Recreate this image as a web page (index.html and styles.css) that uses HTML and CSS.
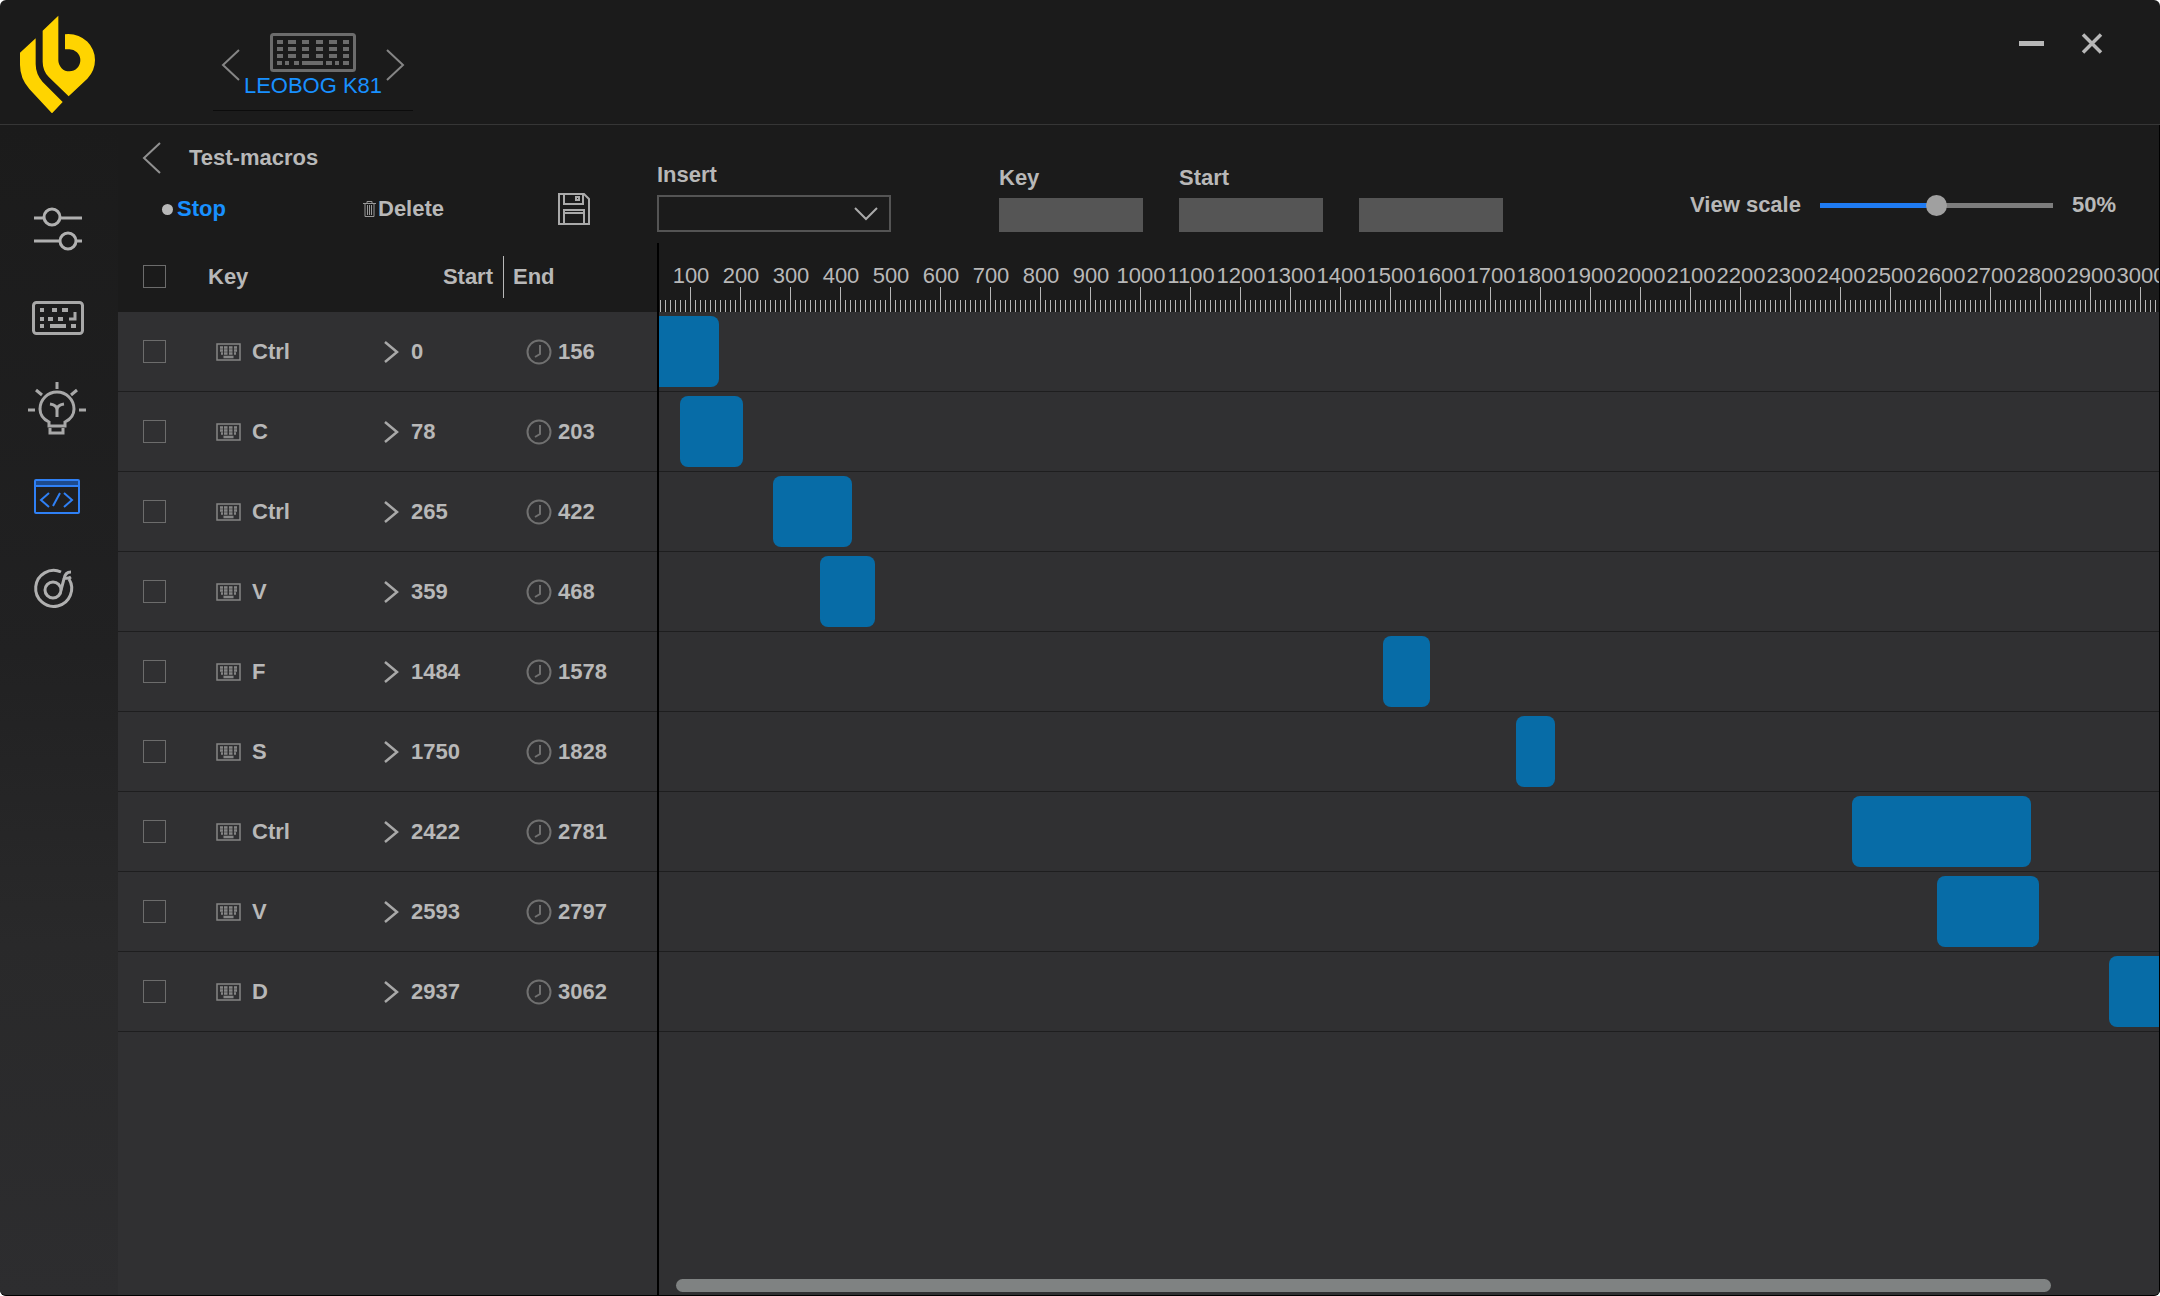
FILE: index.html
```html
<!DOCTYPE html>
<html lang="en">
<head>
  <meta charset="UTF-8">
  <meta name="viewport" content="width=device-width, initial-scale=1.0">
  <title>LEOBOG K81</title>
  <link rel="stylesheet" href="styles.css">
</head>
<body>
  <!-- shared icons -->
  <svg class="sprite" aria-hidden="true">
    <symbol id="icon-key" viewBox="0 0 25 18">
      <rect x="1" y="1" width="23" height="16" fill="none" stroke="#858585" stroke-width="1.5"/>
      <path d="M4 4.500h3M8 4.500h3.500M13 4.500h3.500M18 4.500h3M4 7.500h3M8 7.500h3.500M13 7.500h3.500M18 7.500h3M5 10.500h2M8 10.500h3.500M13 10.500h3.500M18 10.500h2M7.500 14h10" fill="none" stroke="#858585" stroke-width="2.400"/>
    </symbol>
    <symbol id="icon-from" viewBox="0 0 15 22">
      <path d="M1 1l12 10-12 10" fill="none" stroke="#a8a8a8" stroke-width="2.500"/>
    </symbol>
    <symbol id="icon-clock" viewBox="0 0 26 26">
      <circle cx="13" cy="13" r="11.500" fill="none" stroke="#707070" stroke-width="2"/>
      <path d="M14 6v9l-5 3" fill="none" stroke="#707070" stroke-width="2"/>
    </symbol>
  </svg>

  <div class="app">
    <header class="titlebar">
      <div class="logo">
        <svg width="76" height="98" viewBox="57 45 228 294" aria-label="LEOBOG">
          <path fill="#ffd400" d="M107 115L60 158V195Q60 235 88 267L156 340 188 306 128 246Q107 222 107 192Z"/>
          <path fill="#ffd400" d="M175 47L128 92V185Q128 213 147 232L206 289 262 236Q285 212 285 180A80 78 0 0 0 205 102L195 103V148H207A33 33 0 1 1 175 181Z"/>
        </svg>
      </div>
      <div class="device">
        <button class="icon-btn" aria-label="Previous device">
          <svg width="20" height="32" viewBox="0 0 20 32"><path d="M18 1L2 16l16 15" fill="none" stroke="#858585" stroke-width="2"/></svg>
        </button>
        <div class="device-info">
          <svg width="86" height="40" viewBox="0 0 86 40">
            <rect x="1.500" y="1.500" width="83" height="36" rx="2" fill="none" stroke="#6c6c6c" stroke-width="3"/>
            <path d="M7 9h6M18 9h8M32 9h7M46 9h7M59 9h8M73 9h6M7 16h6M18 16h8M32 16h7M46 16h7M59 16h8M73 16h6M7 23h6M18 23h8M32 23h7M46 23h7M59 23h8M73 23h6M7 30h5M15 30h4M24 30h5M32 30h21M56 30h6M65 30h4M73 30h6" fill="none" stroke="#6c6c6c" stroke-width="4"/>
          </svg>
          <span class="device-name">LEOBOG K81</span>
        </div>
        <button class="icon-btn" aria-label="Next device">
          <svg width="20" height="32" viewBox="0 0 20 32"><path d="M2 1l16 15L2 31" fill="none" stroke="#858585" stroke-width="2"/></svg>
        </button>
      </div>
      <div class="window-buttons">
        <button class="icon-btn" aria-label="Minimize">
          <svg width="26" height="22" viewBox="0 0 26 22"><path d="M0 11.500h25" stroke="#b8b8b8" stroke-width="5"/></svg>
        </button>
        <button class="icon-btn" aria-label="Close">
          <svg width="22" height="22" viewBox="0 0 22 22"><path d="M2 2.500l18 18M20 2.500L2 20.500" stroke="#b8b8b8" stroke-width="3.500"/></svg>
        </button>
      </div>
    </header>

    <div class="workspace">
      <nav class="sidebar">
        <button class="nav-btn" aria-label="Settings">
          <svg viewBox="0 184 118 90" fill="none" stroke="#b0b0b0" stroke-width="3">
            <path d="M34 218h10M60 218h22M34 241h26M77 241h5"/>
            <circle cx="52" cy="217" r="8"/><circle cx="68" cy="241" r="8"/>
          </svg>
        </button>
        <button class="nav-btn" aria-label="Keys">
          <svg viewBox="0 274 118 90" fill="none" stroke="#a8a8a8" stroke-width="3">
            <rect x="33.500" y="302.500" width="49" height="31" rx="3"/>
            <path d="M40 310h4M52 310h5M62 310h6M40 319h4M48 319h5M58 319h5M40 326h4M50 326h16M71 326h5" stroke-width="4"/>
            <path d="M75 312v7h-6"/>
          </svg>
        </button>
        <button class="nav-btn" aria-label="Lighting">
          <svg viewBox="0 364 118 90" fill="none" stroke="#a8a8a8" stroke-width="3">
            <path d="M57 382v7M36 390l6 5M77 390l-6 5M28 410h7M79 410h7"/>
            <path d="M49 426v-4c-6-3-9-8-9-13a17 17 0 0 1 34 0c0 5-3 10-9 13v4zM50 428v5h13v-5"/>
            <path d="M50 404q7 1 7 6v7M64 404q-7 1-7 6"/>
          </svg>
        </button>
        <button class="nav-btn" aria-label="Macros">
          <svg viewBox="0 454 118 90" fill="none" stroke="#2f80f5" stroke-width="2">
            <path d="M36 481h42v4H36z" fill="#1d4a8c" stroke="none"/>
            <rect x="35" y="480" width="44" height="33" rx="1"/>
            <path d="M35 486h44"/>
            <path d="M49 493l-8 7 8 7M64 493l8 7-8 7M60 493l-7 13"/>
          </svg>
        </button>
        <button class="nav-btn" aria-label="Music">
          <svg viewBox="0 543 118 90" fill="none" stroke="#b0b0b0" stroke-width="3">
            <path d="M61 571a18 18 0 1 0 8 7"/>
            <circle cx="53" cy="589" r="8"/>
            <path d="M61 589l3-11q1-7 7-7"/><path d="M64 577q4 1 7-1"/>
          </svg>
        </button>
      </nav>

      <main class="editor">
        <section class="macro-tools">
          <div class="macro-title">
            <button class="icon-btn" aria-label="Back">
              <svg width="20" height="32" viewBox="0 0 20 32"><path d="M18 1L2 16l16 15" fill="none" stroke="#909090" stroke-width="2"/></svg>
            </button>
            <span>Test-macros</span>
          </div>
          <div class="macro-actions">
            <button class="text-btn stop"><span class="dot"></span>Stop</button>
            <button class="text-btn delete">
              <svg width="13" height="16" viewBox="0 0 13 16" fill="none" stroke="#999" stroke-width="1"><path d="M0 2.500h13M4 2V.5h5V2M2 3v12.500h9V3M4.500 4v10M6.500 4v10M8.500 4v10"/></svg>
              Delete
            </button>
            <button class="icon-btn" aria-label="Save">
              <svg width="32" height="32" viewBox="0 0 32 32" fill="none" stroke="#aaa" stroke-width="2">
                <path d="M1 1h25l5 5v25H1zM6 1v10h19V1M6 31V17h20v14M6 20h20"/><path d="M18 4h3v3h-3z"/>
              </svg>
            </button>
          </div>
        </section>

        <section class="event-tools">
          <div class="field">
            <label for="insert">Insert</label>
            <div class="select-wrap">
              <select id="insert"><option></option></select>
              <svg width="24" height="14" viewBox="0 0 24 14"><path d="M1 1l11 11L23 1" fill="none" stroke="#aaa" stroke-width="2"/></svg>
            </div>
          </div>
          <div class="values">
            <div class="field">
              <label for="key">Key</label>
              <input class="value-box" id="key" type="text">
            </div>
            <div class="field">
              <label for="start">Start</label>
              <input class="value-box" id="start" type="text">
            </div>
            <div class="field">
              <input class="value-box" type="text" aria-label="End">
            </div>
          </div>
          <div class="scale">
            <label for="scale">View scale</label>
            <input id="scale" type="range" min="0" max="100" value="50">
            <output for="scale">50%</output>
          </div>
        </section>

        <section class="events">
          <table>
            <thead>
              <tr>
                <th class="col-check"><input type="checkbox" aria-label="Select all"></th>
                <th class="col-key">Key</th>
                <th class="col-start">Start</th>
                <th class="col-end"><span>End</span></th>
              </tr>
            </thead>
            <tbody>
              <tr>
                <td><input type="checkbox" aria-label="Ctrl 0"></td>
                <td><div class="cell key"><svg><use href="#icon-key"/></svg>Ctrl</div></td>
                <td><div class="cell from"><svg><use href="#icon-from"/></svg>0</div></td>
                <td><div class="cell to"><svg><use href="#icon-clock"/></svg>156</div></td>
              </tr>
              <tr>
                <td><input type="checkbox" aria-label="C 78"></td>
                <td><div class="cell key"><svg><use href="#icon-key"/></svg>C</div></td>
                <td><div class="cell from"><svg><use href="#icon-from"/></svg>78</div></td>
                <td><div class="cell to"><svg><use href="#icon-clock"/></svg>203</div></td>
              </tr>
              <tr>
                <td><input type="checkbox" aria-label="Ctrl 265"></td>
                <td><div class="cell key"><svg><use href="#icon-key"/></svg>Ctrl</div></td>
                <td><div class="cell from"><svg><use href="#icon-from"/></svg>265</div></td>
                <td><div class="cell to"><svg><use href="#icon-clock"/></svg>422</div></td>
              </tr>
              <tr>
                <td><input type="checkbox" aria-label="V 359"></td>
                <td><div class="cell key"><svg><use href="#icon-key"/></svg>V</div></td>
                <td><div class="cell from"><svg><use href="#icon-from"/></svg>359</div></td>
                <td><div class="cell to"><svg><use href="#icon-clock"/></svg>468</div></td>
              </tr>
              <tr>
                <td><input type="checkbox" aria-label="F 1484"></td>
                <td><div class="cell key"><svg><use href="#icon-key"/></svg>F</div></td>
                <td><div class="cell from"><svg><use href="#icon-from"/></svg>1484</div></td>
                <td><div class="cell to"><svg><use href="#icon-clock"/></svg>1578</div></td>
              </tr>
              <tr>
                <td><input type="checkbox" aria-label="S 1750"></td>
                <td><div class="cell key"><svg><use href="#icon-key"/></svg>S</div></td>
                <td><div class="cell from"><svg><use href="#icon-from"/></svg>1750</div></td>
                <td><div class="cell to"><svg><use href="#icon-clock"/></svg>1828</div></td>
              </tr>
              <tr>
                <td><input type="checkbox" aria-label="Ctrl 2422"></td>
                <td><div class="cell key"><svg><use href="#icon-key"/></svg>Ctrl</div></td>
                <td><div class="cell from"><svg><use href="#icon-from"/></svg>2422</div></td>
                <td><div class="cell to"><svg><use href="#icon-clock"/></svg>2781</div></td>
              </tr>
              <tr>
                <td><input type="checkbox" aria-label="V 2593"></td>
                <td><div class="cell key"><svg><use href="#icon-key"/></svg>V</div></td>
                <td><div class="cell from"><svg><use href="#icon-from"/></svg>2593</div></td>
                <td><div class="cell to"><svg><use href="#icon-clock"/></svg>2797</div></td>
              </tr>
              <tr>
                <td><input type="checkbox" aria-label="D 2937"></td>
                <td><div class="cell key"><svg><use href="#icon-key"/></svg>D</div></td>
                <td><div class="cell from"><svg><use href="#icon-from"/></svg>2937</div></td>
                <td><div class="cell to"><svg><use href="#icon-clock"/></svg>3062</div></td>
              </tr>
            </tbody>
          </table>
        </section>

        <section class="timeline">
          <div class="ruler">
            <span>100</span><span>200</span><span>300</span><span>400</span><span>500</span>
            <span>600</span><span>700</span><span>800</span><span>900</span><span>1000</span>
            <span>1100</span><span>1200</span><span>1300</span><span>1400</span><span>1500</span>
            <span>1600</span><span>1700</span><span>1800</span><span>1900</span><span>2000</span>
            <span>2100</span><span>2200</span><span>2300</span><span>2400</span><span>2500</span>
            <span>2600</span><span>2700</span><span>2800</span><span>2900</span><span>3000</span>
          </div>
          <!-- 1px = 2ms -->
          <div class="lane"><div class="block" style="margin-left: 0px; width: 78px"></div></div>
          <div class="lane"><div class="block" style="margin-left: 39px; width: 63px"></div></div>
          <div class="lane"><div class="block" style="margin-left: 132px; width: 79px"></div></div>
          <div class="lane"><div class="block" style="margin-left: 179px; width: 55px"></div></div>
          <div class="lane"><div class="block" style="margin-left: 742px; width: 47px"></div></div>
          <div class="lane"><div class="block" style="margin-left: 875px; width: 39px"></div></div>
          <div class="lane"><div class="block" style="margin-left: 1211px; width: 179px"></div></div>
          <div class="lane"><div class="block" style="margin-left: 1296px; width: 102px"></div></div>
          <div class="lane"><div class="block" style="margin-left: 1468px; width: 63px"></div></div>
          <div class="scrollbar"></div>
        </section>
      </main>
    </div>
  </div>
</body>
</html>
```
FILE: styles.css
```css
* {
  box-sizing: border-box;
}
body {
  margin: 0;
  background: #fff;
  color: #b8b8b8;
  font-family: "Liberation Sans", Arial, sans-serif;
  font-size: 22px;
  font-weight: bold;
  line-height: 26px;
}
button, input, select {
  font: inherit;
  color: inherit;
}
button {
  padding: 0;
  border: none;
  background: none;
  cursor: pointer;
}
svg {
  display: block;
  flex: none;
}
.sprite {
  position: absolute;
  width: 0;
  height: 0;
}
.app {
  display: flex;
  flex-direction: column;
  min-height: 100vh;
  overflow: hidden;
  border-bottom: 1px solid #000;
  border-radius: 6px;
  background: #1b1b1b;
}

/* title bar */
.titlebar {
  display: flex;
  height: 125px;
  border-bottom: 1px solid #363636;
}
.logo {
  width: 118px;
  padding: 15px 0 0 19px;
}
.device {
  display: flex;
  align-items: center;
  justify-content: space-between;
  width: 200px;
  height: 111px;
  margin-left: 95px;
  padding: 20px 8px 0;
  border-bottom: 1px solid #0c0c0c;
}
.device-info {
  display: flex;
  flex-direction: column;
  align-items: center;
  width: 144px;
  margin: 0 -10px;
  padding-top: 2px;
}
.device-name {
  color: #1890ff;
  font-weight: normal;
  white-space: nowrap;
}
.window-buttons {
  display: flex;
  align-items: flex-start;
  gap: 36px;
  margin-left: auto;
  padding: 32px 57px 0 0;
}

/* left navigation */
.workspace {
  display: flex;
  flex: 1;
}
.sidebar {
  flex: none;
  width: 118px;
  padding-top: 59px;
  background: linear-gradient(#1b1b1b, #212122 45%, #29292a 70%, #2d2d2f);
}
.nav-btn {
  display: block;
  width: 100%;
  height: 90px;
}
.nav-btn svg {
  width: 100%;
  height: 100%;
}

/* macro editor */
.editor {
  display: grid;
  flex: 1;
  grid-template-columns: 539px minmax(0, 1fr);
  grid-template-rows: 118px 1fr;
  min-width: 0;
  border-right: 1px solid #000;
}
.macro-tools {
  padding: 17px 0 0 24px;
}
.macro-title {
  display: flex;
  align-items: center;
  gap: 27px;
}
.macro-actions {
  display: grid;
  grid-template-columns: 201px 195px auto;
  align-items: center;
  justify-content: start;
  margin-top: 19px;
  padding-left: 20px;
}
.text-btn {
  display: flex;
  align-items: center;
}
.stop {
  gap: 4px;
  color: #1890ff;
}
.delete {
  gap: 2px;
}
.dot {
  width: 11px;
  height: 11px;
  border-radius: 50%;
  background: #b8b8b8;
}
.event-tools {
  display: flex;
  align-items: flex-end;
  padding: 0 43px 11px 0;
}
.field {
  display: flex;
  flex-direction: column;
  justify-content: flex-end;
  gap: 7px;
}
.select-wrap {
  position: relative;
}
.select-wrap select {
  display: block;
  width: 234px;
  height: 37px;
  border: 2px solid #545454;
  border-radius: 0;
  background: #1b1b1b;
  appearance: none;
}
.select-wrap svg {
  position: absolute;
  top: 12px;
  right: 13px;
  pointer-events: none;
}
.values {
  display: flex;
  gap: 36px;
  margin-left: 108px;
}
.value-box {
  width: 144px;
  height: 34px;
  padding: 0 8px;
  border: none;
  background: #555;
}
.scale {
  display: flex;
  align-items: center;
  gap: 19px;
  margin: 0 0 14px auto;
}
.scale input {
  width: 233px;
  height: 21px;
  margin: 0;
  background: linear-gradient(90deg, #1f7bf2 50%, #7d7d7d 50%) center / 100% 5px no-repeat;
  appearance: none;
}
.scale input::-webkit-slider-thumb {
  width: 21px;
  height: 21px;
  border-radius: 50%;
  background: #a0a0a0;
  appearance: none;
}

/* event list */
.events {
  background: #303032;
}
table {
  width: 100%;
  table-layout: fixed;
  border-collapse: separate;
  border-spacing: 0;
}
th {
  height: 69px;
  padding: 0 0 2px;
  background: #1b1b1b;
  text-align: left;
}
td {
  height: 80px;
  padding: 0;
  border-bottom: 1px solid #1e1e1f;
}
th:first-child, td:first-child {
  padding-left: 25px;
}
.col-check {
  width: 90px;
}
.col-key {
  width: 176px;
}
.col-start {
  width: 119px;
  padding-right: 10px;
  text-align: right;
}
.col-end span {
  display: block;
  padding: 8px 9px;
  border-left: 1px solid #b8b8b8;
}
.cell {
  display: flex;
  align-items: center;
}
.key {
  gap: 11px;
  padding-left: 8px;
}
.key svg {
  width: 25px;
  height: 18px;
}
.from {
  gap: 12px;
}
.from svg {
  width: 15px;
  height: 22px;
}
.to {
  gap: 6px;
  padding-left: 23px;
}
.to svg {
  width: 26px;
  height: 26px;
}
input[type="checkbox"] {
  display: block;
  width: 23px;
  height: 23px;
  margin: 0;
  border: 1px solid #6c6c6c;
  appearance: none;
}

/* timeline */
.timeline {
  display: flex;
  flex-direction: column;
  overflow: hidden;
  border-left: 2px solid #000;
  background: #303032;
}
.ruler {
  display: flex;
  height: 69px;
  padding: 20px 0 0 7px;
  background:
    repeating-linear-gradient(90deg, #b8b8b8 0 1px, transparent 1px 5px) 1px 100% / 100% 12px repeat-x,
    linear-gradient(90deg, #b8b8b8 1px, transparent 1px) 31px 100% / 50px 25px repeat-x,
    #1b1b1b;
  font-weight: normal;
}
.ruler span {
  flex: none;
  width: 50px;
  text-align: center;
}
.lane {
  height: 80px;
  padding-top: 4px;
  border-bottom: 1px solid #1e1e1f;
}
/* the view is scrolled 18px past zero */
.block {
  position: relative;
  left: -18px;
  height: 71px;
  border-radius: 8px;
  background: #076ca7;
}
.scrollbar {
  height: 13px;
  margin: auto 108px 3px 17px;
  border-radius: 7px;
  background: #7f8282;
}
```
